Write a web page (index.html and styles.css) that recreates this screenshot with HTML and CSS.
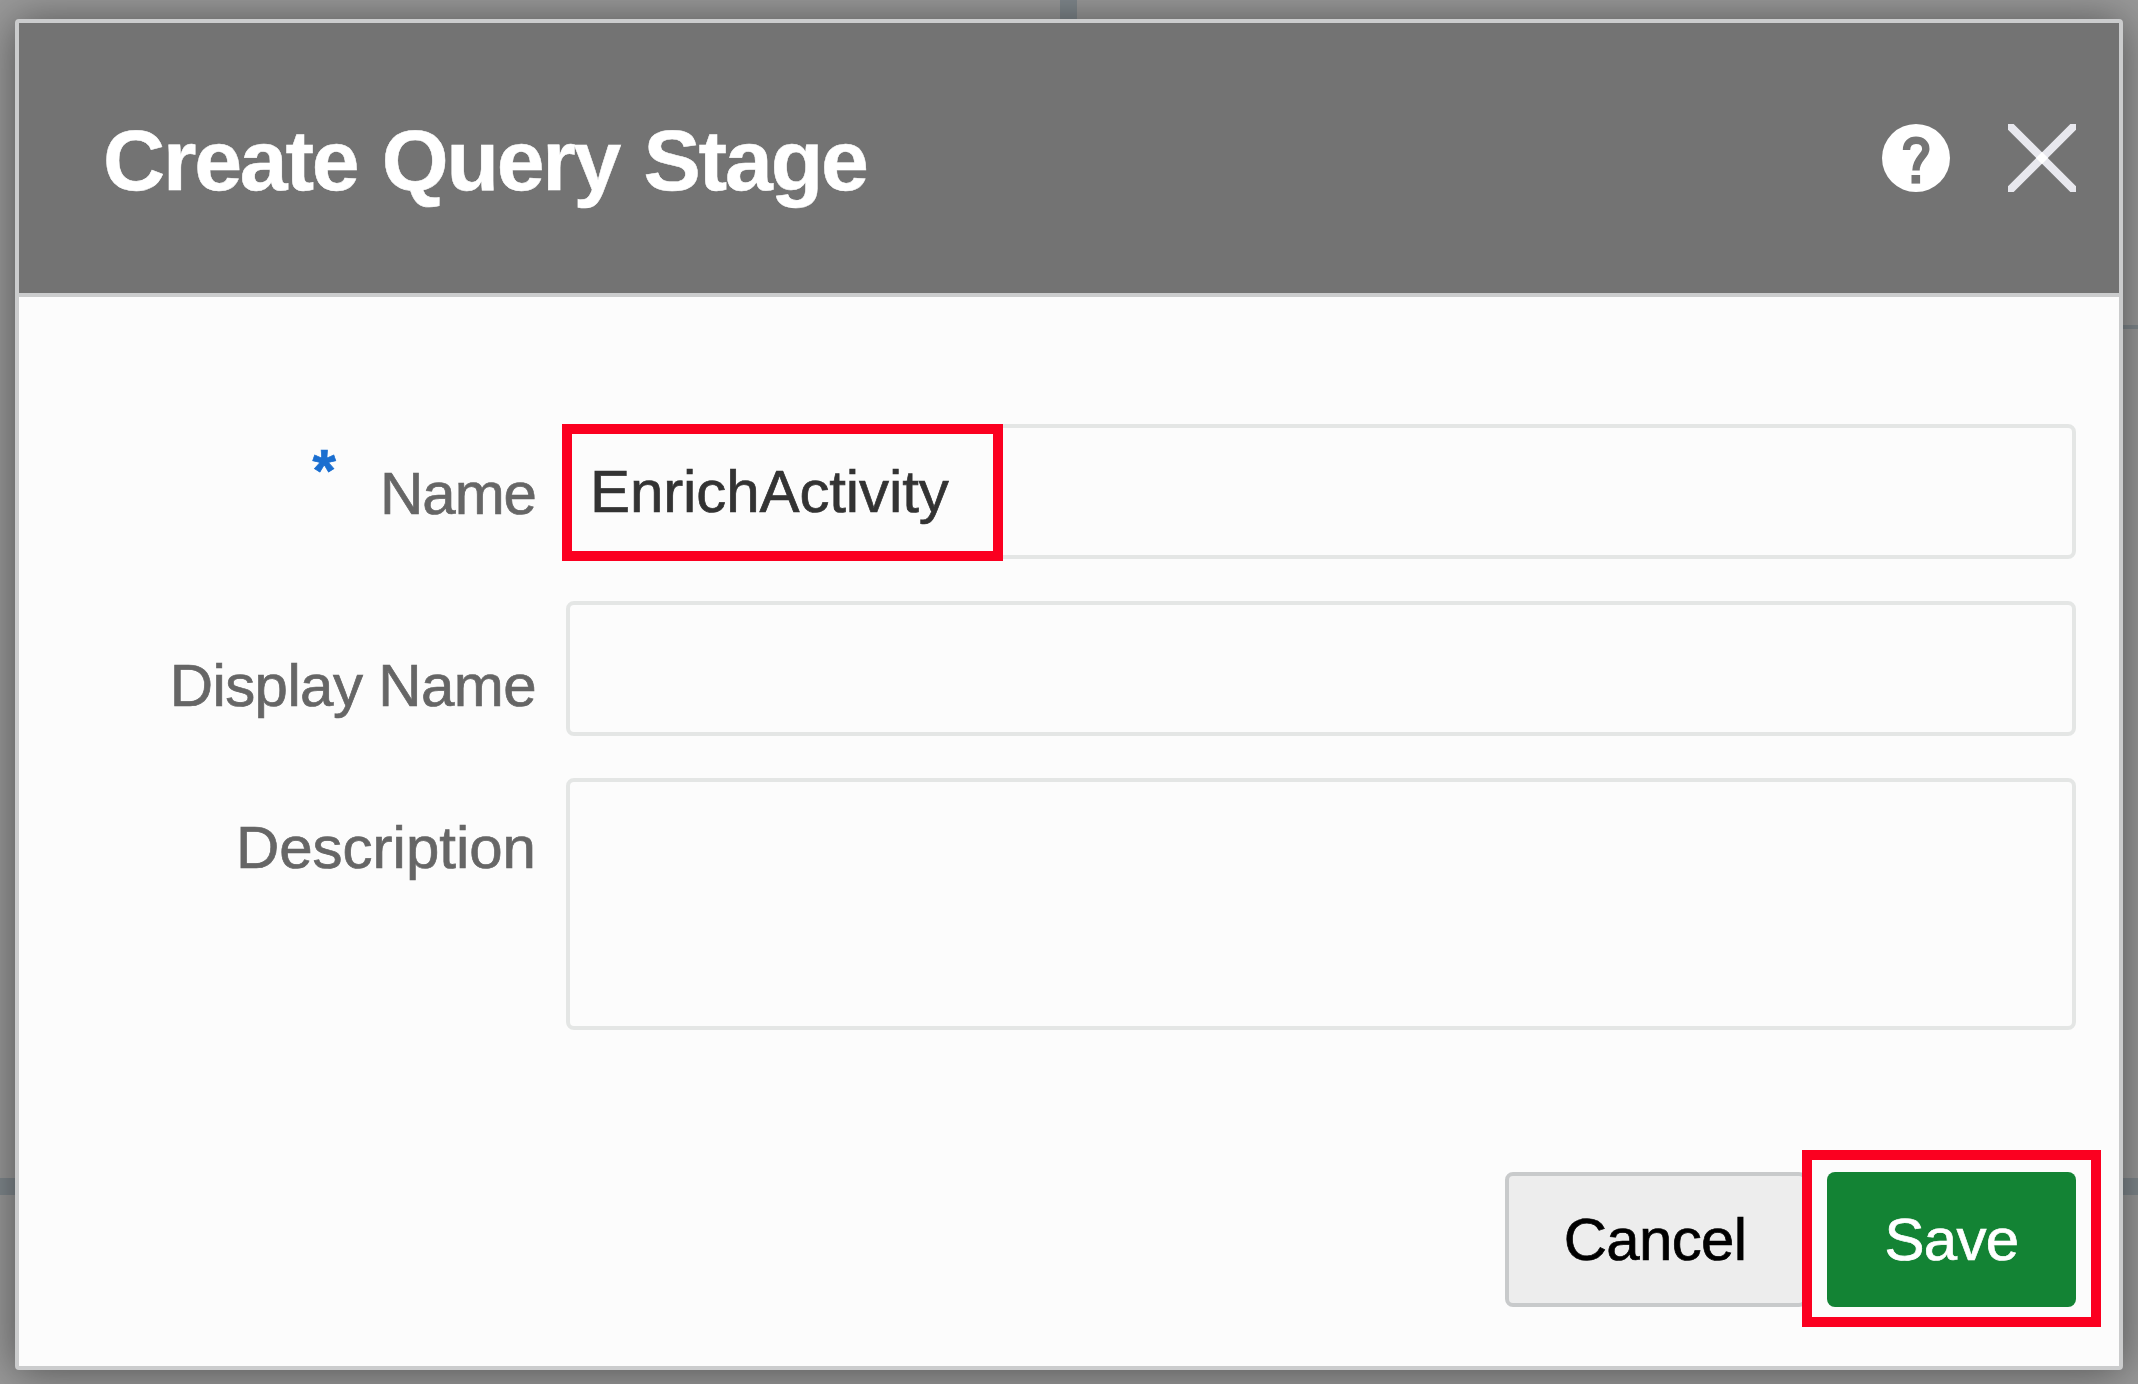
FILE: index.html
```html
<!DOCTYPE html>
<html lang="en">
<head>
<meta charset="utf-8">
<title>Create Query Stage</title>
<link rel="stylesheet" href="styles.css">
</head>
<body>
<main class="dialog" role="dialog" aria-labelledby="dialog-title">
  <header class="dialog-header">
    <h1 class="dialog-title" id="dialog-title">Create Query Stage</h1>
    <div class="header-actions">
      <svg class="icon" viewBox="0 0 68 68" aria-label="Help">
        <circle cx="34" cy="34" r="34" fill="#fff"/>
        <path d="M24.5 26C24.5 19.5 28.5 16.3 34 16.3C39.7 16.3 43.8 19.7 43.8 25C43.8 32 34 34.5 34 46.5" fill="none" stroke="#757575" stroke-width="7.4"/>
        <rect x="29.5" y="51" width="8.6" height="8.6" fill="#757575"/>
      </svg>
      <svg class="icon" viewBox="0 0 68 68" aria-label="Close">
        <path d="M-1 -1L69 69M69 -1L-1 69" fill="none" stroke="#e8e8ee" stroke-width="8"/>
        <path d="M34 28L40 34L34 40L28 34Z" fill="#fff"/>
      </svg>
    </div>
  </header>
  <form class="form">
    <div class="row">
      <label class="label label-name" for="name"><span class="required">*</span>Name</label>
      <div class="field">
        <input class="input" id="name" type="text" value="EnrichActivity">
        <span class="marker marker-name"></span>
      </div>
    </div>
    <div class="row">
      <label class="label label-display" for="display">Display Name</label>
      <input class="input" id="display" type="text">
    </div>
    <div class="row">
      <label class="label" for="desc">Description</label>
      <textarea class="input textarea" id="desc"></textarea>
    </div>
  </form>
  <footer class="footer">
    <button class="button cancel" type="button">Cancel</button>
    <div class="save-wrap">
      <button class="button save" type="button">Save</button>
      <span class="marker marker-save"></span>
    </div>
  </footer>
</main>
</body>
</html>
```
FILE: styles.css
```css
* {
  box-sizing: border-box;
}

body {
  margin: 0;
  height: 1384px;
  padding: 19px 15px 14px;
  overflow: hidden;
  font-family: "Liberation Sans", Arial, sans-serif;
  font-size: 60px;
  background:
    linear-gradient(#7f878c, #7f878c) 1060px 0 / 17px 19px no-repeat,
    linear-gradient(#7f878c, #7f878c) 0 1178px / 100% 17px no-repeat,
    linear-gradient(#7f878c, #7f878c) 100% 325px / 60px 4px no-repeat,
    #999;
}

.dialog {
  display: flex;
  flex-direction: column;
  height: 1351px;
  border: 4px solid #cbcccd;
  border-radius: 4px;
  background: #fcfcfc;
  box-shadow: 0 2px 44px rgba(0, 0, 0, 0.47);
}

.dialog-header {
  display: flex;
  align-items: center;
  justify-content: space-between;
  height: 274px;
  padding: 0 43px 0 84px;
  border-bottom: 4px solid #cbcccd;
  background: #737373;
}

.dialog-title {
  margin: 3px 0 0;
  color: #fff;
  font-size: 86px;
  line-height: 96px;
  letter-spacing: -2.2px;
  word-spacing: 2.5px;
  font-weight: bold;
  -webkit-text-stroke: 0.5px currentColor;
}

.header-actions {
  display: flex;
  gap: 58px;
}

.icon {
  width: 68px;
  height: 68px;
}

.form {
  display: flex;
  flex-direction: column;
  gap: 42px;
  padding: 127px 43px 0 0;
}

.row {
  display: grid;
  grid-template-columns: 517px 1fr;
  column-gap: 30px;
  align-items: start;
}

.label {
  display: flex;
  justify-content: flex-end;
  padding-top: 40px;
  color: #666;
  line-height: 60px;
  letter-spacing: 0;
  white-space: nowrap;
  -webkit-text-stroke: 0.7px currentColor;
}

.label-name {
  letter-spacing: -1px;
}

.label-display {
  padding-top: 55px;
  letter-spacing: -0.6px;
}

.required {
  margin: -23px 45px 0 0;
  color: #1a6ed0;
  font-weight: bold;
}

.field,
.save-wrap {
  position: relative;
}

.input {
  display: block;
  width: 100%;
  height: 135px;
  margin: 0;
  padding: 0 20px;
  border: 4px solid #e4e6e5;
  border-radius: 8px;
  outline: none;
  background: #fcfcfc;
  color: #333;
  font: inherit;
  letter-spacing: -0.1px;
  -webkit-text-stroke: 0.7px currentColor;
}

.textarea {
  height: 252px;
  resize: none;
}

.marker {
  position: absolute;
  border: 10px solid #fb0020;
  pointer-events: none;
}

.marker-name {
  top: 0;
  left: -4px;
  width: 441px;
  height: 137px;
}

.marker-save {
  top: -22px;
  left: -25px;
  width: 299px;
  height: 177px;
}

.footer {
  display: flex;
  justify-content: flex-end;
  gap: 20px;
  padding: 142px 43px 0 0;
}

.button {
  display: block;
  height: 135px;
  margin: 0;
  padding: 0;
  border-radius: 8px;
  font: inherit;
  letter-spacing: -0.7px;
  -webkit-text-stroke: 0.7px currentColor;
}

.cancel {
  width: 302px;
  padding-right: 2px;
  border: 4px solid #c8cacb;
  background: #ededed;
  color: #000;
}

.save {
  width: 249px;
  border: 0;
  background: #138334;
  color: #fff;
}
```
